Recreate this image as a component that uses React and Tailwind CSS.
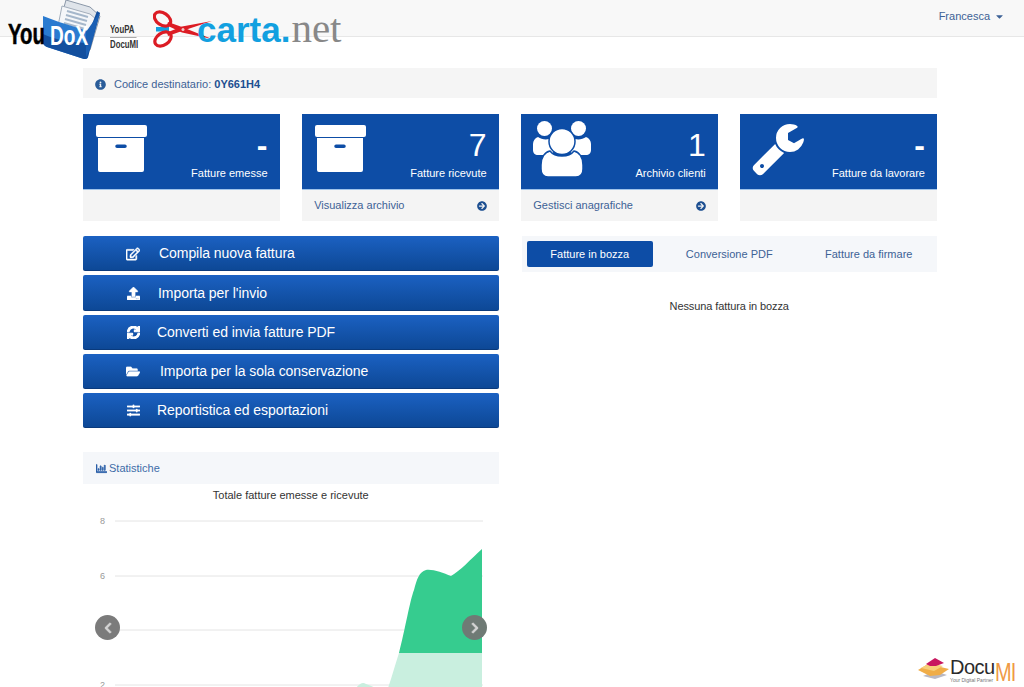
import React from "react";
import { FaRegEdit, FaUpload, FaSync, FaFolderOpen, FaSlidersH, FaInfoCircle, FaArrowCircleRight, FaRegChartBar, FaChevronLeft, FaChevronRight, FaCaretDown } from "react-icons/fa";

const ArchiveIcon = () => (
  <svg width="51" height="47" viewBox="0 0 51 47" fill="#fff">
    <rect x="0" y="0" width="51" height="12" rx="2" />
    <path fillRule="evenodd" d="M3 13h45v32a2 2 0 0 1-2 2H4a2 2 0 0 1-2-2V13zM21 19.500a1.500 1.500 0 0 0 0 3.500h8a1.700 1.700 0 0 0 0-3.500z" />
  </svg>
);

const UsersIcon = () => (
  <svg width="58" height="56" viewBox="0 0 58 56" fill="#fff">
    <circle cx="11.500" cy="7.500" r="7.500" />
    <circle cx="45.500" cy="7.500" r="7.500" />
    <path d="M5 16c3 2 7 3 11 2l10 6-8 10H5c-3 0-5-2-5-5v-6c0-3 2-6 5-7z" />
    <path d="M53 16c-3 2-7 3-11 2l-10 6 8 10h13c3 0 5-2 5-5v-6c0-3-2-6-5-7z" />
    <path d="M17 30c3 4 7 5 12 5s9-1 12-5c5 1 9 6 9 14v4c0 5-3 8-7 8H15c-4 0-7-3-7-8v-4c0-8 4-13 9-14z" stroke="#0d4da6" strokeWidth="1.500" />
    <circle cx="29" cy="20.500" r="13" stroke="#0d4da6" strokeWidth="1.500" />
  </svg>
);

const WrenchIcon = () => (
  <svg width="52" height="52" viewBox="64 128 1664 1664" fill="#fff">
    <path d="M448 1472q0-26-19-45t-45-19-45 19-19 45 19 45 45 19 45-19 19-45zm644-420l-682 682q-37 37-90 37-52 0-90-37l-106-108q-38-36-38-90 0-53 38-91l681-681q39 98 114.500 173.500t173.500 114.500zm634-435q0 39-23 106-47 134-164.500 217.500t-258.500 83.500q-185 0-316.500-131.500t-131.500-316.500 131.500-316.500 316.500-131.500q58 0 121.500 16.500t107.500 46.500q16 11 16 28t-16 28l-293 169v224l193 107q5-3 79-48.500t135.500-81 70.500-35.500q15 0 23.500 10t8.500 25z" />
  </svg>
);

const cards = [
  { icon: <ArchiveIcon />, value: "-", valueClass: "font-bold", label: "Fatture emesse", link: null, pad: "pt-[11px] pl-[13px]" },
  { icon: <ArchiveIcon />, value: "7", valueClass: "", label: "Fatture ricevute", link: "Visualizza archivio", pad: "pt-[11px] pl-[13px]" },
  { icon: <UsersIcon />, value: "1", valueClass: "", label: "Archivio clienti", link: "Gestisci anagrafiche", pad: "pt-[7px] pl-[12px]" },
  { icon: <WrenchIcon />, value: "-", valueClass: "font-bold", label: "Fatture da lavorare", link: null, pad: "pt-[10px] pl-[12px]" },
];

const actions = [
  { icon: <FaRegEdit size={14} className="stroke-[20]" />, label: "Compila nuova fattura", gap: "ml-[19px]" },
  { icon: <FaUpload size={13} className="stroke-[20]" />, label: "Importa per l'invio", gap: "ml-[18px]" },
  { icon: <FaSync size={13} className="stroke-[40]" />, label: "Converti ed invia fatture PDF", gap: "ml-[17px]" },
  { icon: <FaFolderOpen size={15} className="stroke-[10]" />, label: "Importa per la sola conservazione", gap: "ml-[20px]" },
  { icon: <FaSlidersH size={13} className="stroke-[10]" />, label: "Reportistica ed esportazioni", gap: "ml-[17px]" },
];

const Card = ({ icon, value, valueClass, label, link, pad }) => (
  <div className="w-[196.5px]">
    <div className="flex justify-between h-[75px] bg-[#0d4da6] text-white">
      <div className={pad}>{icon}</div>
      <div className="flex flex-col items-end pr-[12px] pt-[13px]">
        <div className={`text-[32px] leading-[36px] h-[36px] ${valueClass}`}>{value}</div>
        <div className="text-[11px] leading-[14px] mt-[3px]">{label}</div>
      </div>
    </div>
    <div className="flex items-center justify-between h-[32px] bg-[#f4f4f4] pl-[12px] pr-[12px] border-t border-[#9fc3ea] text-[11px] text-[#3d6296]">
      {link && <span>{link}</span>}
      {link && <FaArrowCircleRight size={10} className="text-[#1d4f91]" />}
    </div>
  </div>
);

const YouDoxLogo = () => (
  <div className="absolute left-0 top-0 w-[140px] h-[60px]">
    <svg className="absolute left-[40px] top-0" width="64" height="60" viewBox="0 0 64 60">
      <path d="M26 0l24 7 10 9-10 34-34-14z" fill="#dfe4ea" stroke="#8a97a8" strokeWidth="1" />
      <path d="M22 6l28 8 7 6-9 30-32-14z" fill="#f4f6f9" stroke="#a3aebb" strokeWidth="1" />
      <path d="M27 11l21 6M26 15l21 6M25 19l21 6M24 23l21 6" stroke="#a5b7cb" strokeWidth="2" />
      <path d="M3 16l16 6 29 9c3 1 4 2 3 5l-3 21c-1 2-2 2-4 2L7 47c-3-1-4-3-4-6z" fill="#2a7bd0" />
      <path d="M3 34c12 6 28 8 42 9l12-32 3 2-12 44c-1 2-2 2-4 2L7 47c-3-1-4-3-4-6z" fill="#134f9e" />
      <path d="M46 32l14-20-10 37-4 8z" fill="#1a5fb4" />
    </svg>
    <span className="absolute left-[8px] top-[18px] text-[29px] leading-[32px] font-bold text-black font-['Liberation_Sans',sans-serif] [-webkit-text-stroke:0.5px_#000] scale-x-[0.7] origin-left">You</span>
    <span className="absolute left-[50px] top-[20px] text-[28px] leading-[32px] font-bold text-white font-['Liberation_Sans',sans-serif] scale-x-[0.68] origin-left">DoX</span>
    <div className="absolute left-[110px] top-[24px] w-[30px] text-[10px] leading-[12px] font-bold text-[#333] scale-x-[0.78] origin-left">
      <div className="border-b border-[#aaa] w-[34px] pb-[1px]">YouPA</div>
      <div className="mt-[1px]">DocuMI</div>
    </div>
  </div>
);

const CartaLogo = () => (
  <div className="absolute left-[153px] top-[9px] w-[195px] h-[42px]">
    <svg className="absolute left-0 top-0" width="62" height="40" viewBox="0 0 62 40">
      <rect x="3" y="18" width="13" height="4.500" fill="#12a0e0" />
      <ellipse cx="9.500" cy="10" rx="9" ry="6" fill="none" stroke="#dc1c24" strokeWidth="3.200" transform="rotate(35 9.500 10)" />
      <ellipse cx="10" cy="30" rx="9" ry="6" fill="none" stroke="#dc1c24" strokeWidth="3.200" transform="rotate(-35 10 30)" />
      <path d="M15 13L29 18L59 30L29 23.500L14 16.500Z" fill="#dc1c24" />
      <path d="M15 27L29 22L59 12L29 17.500L14 23.500Z" fill="#dc1c24" />
      <circle cx="30" cy="20.500" r="1.500" fill="#f4c7c7" />
    </svg>
    <span className="absolute left-[44px] top-[-1px] flex items-baseline text-[35px] leading-[40px] font-bold text-[#12a0e0] font-['Liberation_Sans',sans-serif]">carta.<span className="ml-[1px] font-['Liberation_Serif',serif] font-normal text-[#888] text-[41px] leading-[40px]">net</span></span>
  </div>
);

const Chart = () => (
  <svg className="absolute left-0 top-[47px]" width="416" height="190" viewBox="83 499 416 190">
    {[521, 576, 630, 685].map((y) => (
      <line key={y} x1="115" x2="483" y1={y} y2={y} stroke="#e4e4e4" strokeWidth="1" />
    ))}
    <g fontSize="9" fill="#999" textAnchor="middle" fontFamily="'Liberation Sans', sans-serif">
      <text x="102.500" y="524">8</text>
      <text x="102.500" y="579">6</text>
      <text x="102.500" y="688">2</text>
    </g>
    <path d="M399 653C405 630 410 600 414 590C417 579 419 572 426 570C433 569 443 573 451 576C460 571 471 559 482 549V653Z" fill="#36cc8f" />
    <path d="M356 688C360 683 363 682 366 684C370 685 373 687 376 688ZM388 688C392 677 395 665 399 653H482V688Z" fill="#c9efdf" />
  </svg>
);

const DocuLogo = () => (
  <div className="absolute left-[917px] top-[657px] w-[102px] h-[26px]">
    <svg className="absolute left-0 top-0" width="33" height="24" viewBox="0 0 33 24">
      <path d="M6 19l12-5 12 4-12 4z" fill="#b9b9c4" />
      <path d="M1 13l10-6 21 5-9 6-10 1z" fill="#f0ad48" />
      <path d="M4 11l9-5 13 3-9 5z" fill="#f7cf7a" />
      <path d="M9 7l9-6 9 5-8 3-6 0z" fill="#c8175f" />
    </svg>
    <span className="absolute left-[33px] top-[-1px] text-[20px] leading-[22px] text-[#2b2b2b] tracking-[-0.5px] font-['Liberation_Sans',sans-serif]">Docu</span>
    <span className="absolute left-[78px] top-[2px] text-[25px] leading-[26px] text-[#ef9a45] tracking-[-1px] font-['Liberation_Sans',sans-serif] scale-x-[0.8] origin-left">MI</span>
    <span className="absolute left-[33px] top-[20px] text-[5px] leading-[6px] text-[#777] font-['Liberation_Sans',sans-serif]">Your Digital Partner</span>
  </div>
);

export default function App() {
  return (
    <div className="relative h-[687px] w-[1024px] overflow-hidden bg-white font-['Liberation_Sans',Arial,sans-serif]">
      <header className="h-[37px] bg-[#f8f8f8] border-b border-[#e7e7e7] flex justify-end items-start pr-[19px] pt-[9px]">
        <span className="flex items-center gap-[4px] text-[11px] leading-[14px] text-[#3d6296]">
          Francesca <FaCaretDown size={11} />
        </span>
      </header>
      <YouDoxLogo />
      <CartaLogo />

      <main className="w-[854px] ml-[83px] mt-[31px]">
        <div className="flex items-center h-[30px] bg-[#f5f5f5] pl-[12px] pt-[2px] text-[11px] text-[#3d6296]">
          <FaInfoCircle size={11} className="text-[#2a5c99]" />
          <span className="ml-[8px]">Codice destinatario: <b className="text-[#1d4f91]">0Y661H4</b></span>
        </div>

        <div className="flex justify-between mt-[16px]">
          {cards.map((c) => (
            <Card key={c.label} {...c} />
          ))}
        </div>

        <div className="flex justify-between mt-[15px]">
          <div className="w-[415.5px] relative">
            <div className="flex flex-col gap-[4px]">
              {actions.map((a) => (
                <div key={a.label} className="flex items-center h-[35.25px] pl-[43px] pt-[1.5px] rounded-[2px] text-white text-[14px] tracking-[-0.06px] bg-gradient-to-b from-[#1b61c2] to-[#0d4896] border-b border-[#0a3a7c]">
                  <span className="flex justify-center w-[14px]">{a.icon}</span>
                  <span className={a.gap}>{a.label}</span>
                </div>
              ))}
            </div>

            <div className="relative mt-[24px]">
              <div className="flex items-center gap-[2px] h-[32px] bg-[#f5f7fa] pl-[13px] text-[11px] text-[#3d6ca8]">
                <FaRegChartBar size={11} className="text-[#2a5fa8] stroke-[30]" /> Statistiche
              </div>
              <div className="text-center text-[11px] leading-[14px] text-[#333] mt-[4px]">Totale fatture emesse e ricevute</div>
              <Chart />
              <button className="absolute left-[12px] top-[163px] flex items-center justify-center w-[25px] h-[25px] rounded-full bg-[#7b7b7b] text-[#d4d4d4]">
                <FaChevronLeft size={12} className="stroke-[30]" />
              </button>
              <button className="absolute left-[379px] top-[163px] flex items-center justify-center w-[25px] h-[25px] rounded-full bg-[#6f7a75] text-[#d4d4d4]">
                <FaChevronRight size={12} className="stroke-[30]" />
              </button>
            </div>
          </div>

          <div className="w-[415.5px]">
            <div className="flex items-center h-[36px] bg-[#f5f7fa] px-[5px] text-[11px]">
              <div className="flex items-center justify-center w-[127px] h-[26px] rounded-[2px] bg-[#0d4da6] text-white">Fatture in bozza</div>
              <div className="flex items-center justify-center w-[153px] text-[#3d6296]">Conversione PDF</div>
              <div className="flex items-center justify-center w-[127px] text-[#3d6296]">Fatture da firmare</div>
            </div>
            <div className="text-center text-[11px] leading-[14px] tracking-[-0.1px] text-[#333] mt-[27px]">Nessuna fattura in bozza</div>
          </div>
        </div>
      </main>
      <DocuLogo />
    </div>
  );
}
